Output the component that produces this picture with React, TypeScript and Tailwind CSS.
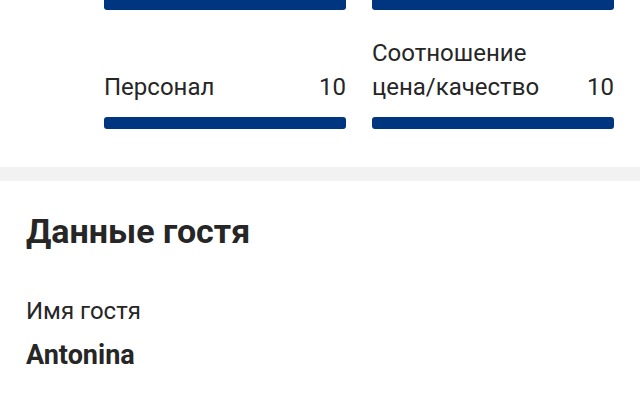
import React from 'react'

const Score = ({ label, value }: { label: string; value: string }) => {
  return (
    <div className="flex flex-col justify-end">
      <div className="flex items-end justify-between gap-4">
        <span className="text-[24px] leading-[34px]">{label}</span>
        <span className="text-[24px] leading-[34px]">{value}</span>
      </div>
      <div className="mt-[13px] h-[12px] rounded-[3px] bg-[#003580]" />
    </div>
  )
}

const App = () => {
  return (
    <div className="w-[640px] h-[400px] overflow-hidden bg-white font-['Roboto',sans-serif] text-[#262626]">
      <section className="pl-[104px] pr-[26px] pb-[38px]">
        <div className="grid grid-cols-2 items-end gap-x-[26px] gap-y-[26px]">
          <div className="h-[10px] rounded-b-[3px] bg-[#003580]" />
          <div className="h-[10px] rounded-b-[3px] bg-[#003580]" />
          <Score label="Персонал" value="10" />
          <Score label="Соотношение цена/качество" value="10" />
        </div>
      </section>

      <div className="h-[14px] bg-[#f2f2f2]" />

      <section className="px-[26px] pt-[30px]">
        <h2 className="text-[34px] leading-[40px] font-bold">Данные гостя</h2>
        <div className="mt-[44px] text-[24px] leading-[32px]">Имя гостя</div>
        <div className="mt-[10px] text-[27px] leading-[36px] font-bold">Antonina</div>
      </section>
    </div>
  )
}

export default App
